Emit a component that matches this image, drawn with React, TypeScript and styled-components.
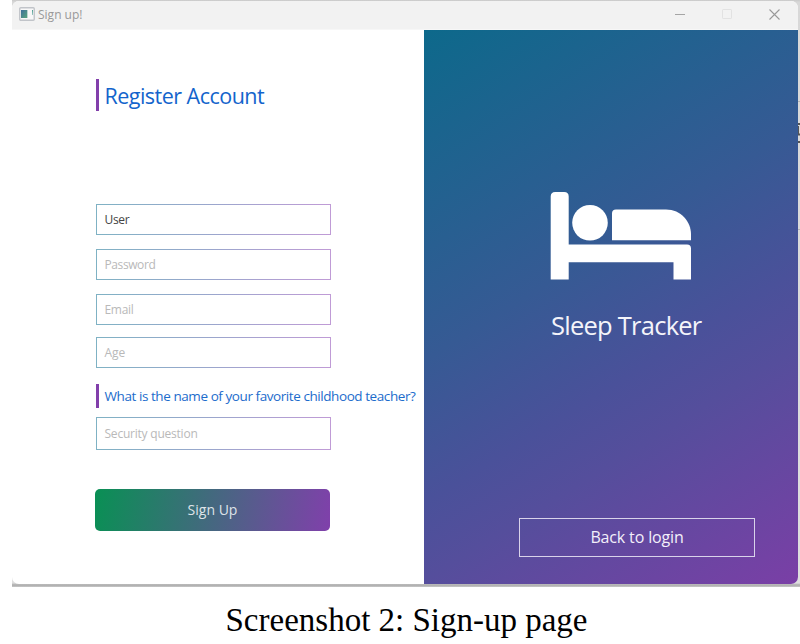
import React from 'react';
import styled, { createGlobalStyle } from 'styled-components';

const GlobalStyle = createGlobalStyle`
  * { box-sizing: border-box; }
  body { margin: 0; background: #fff; overflow: hidden; }
`;

const Page = styled.main`
  width: 800px;
  height: 644px;
  display: flex;
  flex-direction: column;
  background: #fff;
  font-family: 'Open Sans', 'Noto Sans', sans-serif;
`;

const Desktop = styled.div`
  position: relative;
  height: 587px;
  margin-left: 12px;
  padding: 1px 2px 3px 0;
  background: linear-gradient(to bottom, #c9c9c9 0, #d8d8d8 2px, #dedede 583px, #ababab 585px, #c8c8c8 587px);
`;

const Backdrop = styled.svg`
  position: absolute;
  right: 0;
  top: 0;
`;

const Window = styled.section`
  position: relative;
  height: 583px;
  display: flex;
  flex-direction: column;
  border-radius: 7px;
  overflow: hidden;
  background: #fff;
`;

const TitleBar = styled.header`
  height: 29px;
  flex: none;
  display: flex;
  align-items: center;
  justify-content: space-between;
  padding: 0 18px 2px 7px;
  background: #f2f2f2;
  border-bottom: 1px solid #f7f7f7;
`;

const TitleGroup = styled.div`
  display: flex;
  align-items: center;
  gap: 3px;

  span { padding-top: 2px; }
`;

const Controls = styled.div`
  display: flex;
  align-items: center;
  gap: 37px;
`;

const Text = styled.span<{ $size: number; $color: string; $track?: number }>`
  font-size: ${p => p.$size}px;
  line-height: 1.36;
  color: ${p => p.$color};
  letter-spacing: ${p => p.$track ?? 0}px;
  white-space: nowrap;
`;

const Body = styled.div`
  flex: 1;
  display: flex;
`;

const FormPane = styled.form`
  width: 412px;
  padding: 49px 0 0 84px;
  display: flex;
  flex-direction: column;
  align-items: flex-start;
`;

const Accent = styled.div<{ $height: number; $after: number; $drop?: number }>`
  height: ${p => p.$height}px;
  margin-bottom: ${p => p.$after}px;
  padding-left: 5.5px;
  padding-top: ${p => p.$drop ?? 0}px;
  border-left: 3px solid #823fab;
  display: flex;
  align-items: center;
`;

const Field = styled.div<{ $height?: number; $after: number }>`
  width: 235px;
  height: ${p => p.$height ?? 31}px;
  margin-bottom: ${p => p.$after}px;
  padding: 2px 8px 0 7.5px;
  display: flex;
  align-items: center;
  border: 1px solid transparent;
  background: linear-gradient(#fff, #fff) padding-box,
    linear-gradient(to right, #7fb2c4, #9ba6cd 50%, #c09bd6) border-box;
`;

const SignUpButton = styled.button`
  width: 235px;
  height: 42px;
  margin-left: -1px;
  padding: 0;
  border: 0;
  border-radius: 5px;
  font-family: inherit;
  background: linear-gradient(100deg, #099054, #8040ab);
`;

const BrandPane = styled.aside`
  width: 374px;
  display: flex;
  flex-direction: column;
  align-items: flex-start;
  padding-top: 160px;
  background: linear-gradient(148deg, #0d698b, #365a94 42%, #4a519a 60%, #554e9c 70%, #7a3fa6);
`;

const BrandName = styled.div`
  height: 38px;
  margin: 26px 0 174px 127px;
  display: flex;
  align-items: center;
`;

const BedIcon = styled.svg`
  display: block;
  margin-left: 126px;
`;

const BackButton = styled.button`
  width: 236px;
  height: 39px;
  margin-left: 95px;
  padding: 1px 0 0;
  border: 1px solid #d9d3ea;
  background: transparent;
  font-family: inherit;
`;

const Caption = styled.p`
  margin: 14px 0 0 225.5px;
  font: 33px/38px 'Liberation Serif', serif;
  color: #000;
  white-space: nowrap;
`;

export default function App() {
  return (
    <Page>
      <GlobalStyle />
      <Desktop>
        <Backdrop width="10" height="587" viewBox="0 0 10 587">
          <path d="M8 101.5h2M8 229.5h2" stroke="#b5b5b5" />
          <path d="M8 124h2M8 134.5h2M8 142h2" stroke="#555" strokeWidth="2" />
          <path d="M8.5 126v8" stroke="#555" />
        </Backdrop>
        <Window>
          <TitleBar>
            <TitleGroup>
              <svg width="16" height="14" viewBox="0 0 16 14">
                <defs>
                  <linearGradient id="app" x2="1" y2="1">
                    <stop stopColor="#3e6f9c" />
                    <stop offset="1" stopColor="#57a57c" />
                  </linearGradient>
                </defs>
                <rect x=".75" y=".75" width="14.5" height="12.5" rx="1" fill="#f8f8f8" stroke="#c1c4c9" strokeWidth="1.4" />
                <rect x="2" y="3" width="6" height="8" fill="url(#app)" />
                <rect x="8" y="3" width="1" height="8" fill="#bcd4d2" />
                <path d="M13 3h1v5h-.5z" fill="#4c9d91" />
              </svg>
              <Text $size={12} $color="#999">Sign up!</Text>
            </TitleGroup>
            <Controls>
              <svg width="10" height="10" viewBox="0 0 10 10">
                <path d="M0 5.5h10" stroke="#a5a5a5" />
              </svg>
              <svg width="10" height="10" viewBox="0 0 10 10">
                <rect x=".5" y=".5" width="9" height="9" rx=".6" fill="none" stroke="#e2e2e2" />
              </svg>
              <svg width="11" height="11" viewBox="0 0 11 11">
                <path d="M.5.5l10 10M10.5.5l-10 10" stroke="#999" strokeWidth="1.1" />
              </svg>
            </Controls>
          </TitleBar>
          <Body>
            <FormPane>
              <Accent $height={32} $after={93} $drop={2}>
                <Text $size={21.5} $color="#1364cc" $track={-0.52}>Register Account</Text>
              </Accent>
              <Field $after={14}><Text $size={12} $color="#444" $track={-0.3}>User</Text></Field>
              <Field $after={14}><Text $size={12} $color="#b9b9b9" $track={-0.4}>Password</Text></Field>
              <Field $after={12}><Text $size={12} $color="#b9b9b9" $track={-0.3}>Email</Text></Field>
              <Field $after={16}><Text $size={12} $color="#b9b9b9">Age</Text></Field>
              <Accent $height={24} $after={9}>
                <Text $size={13.5} $color="#1c6ccc" $track={-0.43}>What is the name of your favorite childhood teacher?</Text>
              </Accent>
              <Field $height={33} $after={39}><Text $size={12} $color="#b9b9b9" $track={-0.22}>Security question</Text></Field>
              <SignUpButton type="button"><Text $size={14} $color="#dfe3e8">Sign Up</Text></SignUpButton>
            </FormPane>
            <BrandPane>
              <BedIcon width="142" height="90" viewBox="0 0 142 90" fill="#fff">
                <path d="M.7 89.5V6.5q0-4.5 4.5-4.5h9q4.5 0 4.5 4.5v48H137q4 0 4 4v31h-17.5V72.2H18.7v17.3z" />
                <circle cx="40" cy="32.8" r="17.8" />
                <path d="M62 50.300V23.500q0-4 4-4h50c15 0 25 12 25 25v5.800z" />
              </BedIcon>
              <BrandName>
                <Text $size={25.5} $color="#f4f4fa" $track={-0.75}>Sleep Tracker</Text>
              </BrandName>
              <BackButton type="button"><Text $size={16} $color="#f3effa" $track={-0.15}>Back to login</Text></BackButton>
            </BrandPane>
          </Body>
        </Window>
      </Desktop>
      <Caption>Screenshot 2: Sign-up page</Caption>
    </Page>
  );
}
